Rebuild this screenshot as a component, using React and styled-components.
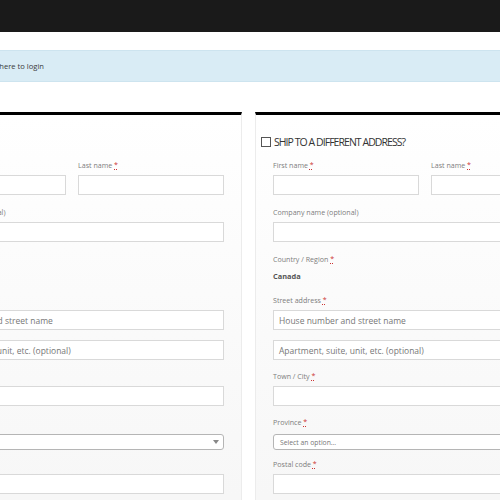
import React from "react";
import styled, { createGlobalStyle } from "styled-components";

const Global = createGlobalStyle`
  html, body { margin: 0; padding: 0; background: #fff; overflow: hidden; }
  body { font-family: "Open Sans", "Liberation Sans", sans-serif; width: 500px; height: 500px; }
`;

const Page = styled.div`
  width: 500px;
  height: 500px;
  overflow: hidden;
  display: flex;
  flex-direction: column;
`;

const Header = styled.header`
  height: 32px;
  background: #1a1a1a;
  flex-shrink: 0;
`;

const Notice = styled.div`
  margin-top: 18px;
  height: 30px;
  background: #d9ecf5;
  border-top: 1px solid #cde4ef;
  border-bottom: 1px solid #cde4ef;
  display: flex;
  align-items: center;
  font-size: 7.6px;
  color: #3a3a3a;
  flex-shrink: 0;
`;

const NoticeLead = styled.span`
  margin-left: -156px;
  width: 200px;
  flex-shrink: 0;
  text-align: right;
  white-space: nowrap;
`;

const Columns = styled.div`
  margin-top: 30px;
  margin-left: -98px;
  display: flex;
  gap: 13px;
  align-items: flex-start;
`;

const Panel = styled.section`
  width: 304px;
  flex-shrink: 0;
  border-top: 3px solid #000;
  border-left: 1px solid #ececec;
  border-right: 1px solid #ececec;
  background: linear-gradient(#fff, #f9f9f9 60%, #f6f6f6);
  padding: 0 17px 20px 17px;
  height: 420px;
`;

const PanelHead = styled.div`
  height: 34px;
  padding-top: 10px;
  display: flex;
  align-items: center;
  margin-left: -12px;
  gap: 3px;
`;

const Check = styled.span`
  width: 8px;
  height: 8px;
  border: 1px solid #555;
  background: #fff;
  display: inline-block;
`;

const HeadText = styled.span`
  font-size: 10.5px;
  letter-spacing: -0.95px;
  color: #333;
  text-transform: uppercase;
  white-space: nowrap;
`;

const Row = styled.div`
  display: flex;
  gap: 12px;
  margin-bottom: ${(p) => p.$mb ?? 11}px;
`;

const Field = styled.div`
  flex: 1;
  display: flex;
  flex-direction: column;
`;

const Label = styled.label`
  font-size: 7.1px;
  color: #7d7d7d;
  height: 12px;
  line-height: 12px;
  margin-bottom: ${(p) => p.$mb ?? 4}px;
  white-space: nowrap;
`;

const Req = styled.abbr`
  color: #c33;
  text-decoration: underline dotted;
`;

const Input = styled.div`
  height: 18px;
  border: 1px solid #d9d9d9;
  background: #fff;
  display: flex;
  align-items: center;
  padding: 0 5px;
  font-size: 8.5px;
  color: #777;
  white-space: nowrap;
  overflow: hidden;
  margin-bottom: ${(p) => p.$mb ?? 0}px;
`;

const Select = styled.div`
  height: 14px;
  border: 1px solid #b5b5b5;
  border-radius: 3px;
  background: #fff;
  display: flex;
  align-items: center;
  justify-content: space-between;
  padding: 0 4px 0 6px;
  font-size: 6.8px;
  color: #777;
  white-space: nowrap;
`;

const Arrow = styled.span`
  width: 0;
  height: 0;
  border-left: 3px solid transparent;
  border-right: 3px solid transparent;
  border-top: 4px solid #888;
`;

const StaticValue = styled.div`
  font-size: 7.4px;
  font-weight: 700;
  color: #555;
  height: 12px;
  line-height: 12px;
`;

const R = () => <Req title="required">*</Req>;

function AddressFields({ country }) {
  return (
    <>
      <Row $mb={11}>
        <Field>
          <Label>First name <R /></Label>
          <Input />
        </Field>
        <Field>
          <Label>Last name <R /></Label>
          <Input />
        </Field>
      </Row>
      <Row $mb={11}>
        <Field>
          <Label>Company name (optional)</Label>
          <Input />
        </Field>
      </Row>
      <Row $mb={12}>
        <Field>
          <Label $mb={5}>Country / Region <R /></Label>
          <StaticValue>{country}</StaticValue>
        </Field>
      </Row>
      <Row $mb={10}>
        <Field>
          <Label>Street address <R /></Label>
          <Input $mb={10}>House number and street name</Input>
          <Input>Apartment, suite, unit, etc. (optional)</Input>
        </Field>
      </Row>
      <Row $mb={10}>
        <Field>
          <Label>Town / City <R /></Label>
          <Input />
        </Field>
      </Row>
      <Row $mb={8}>
        <Field>
          <Label $mb={6}>Province <R /></Label>
          <Select>
            Select an option…
            <Arrow />
          </Select>
        </Field>
      </Row>
      <Row>
        <Field>
          <Label>Postal code <R /></Label>
          <Input />
        </Field>
      </Row>
    </>
  );
}

export default function App() {
  return (
    <Page>
      <Global />
      <Header />
      <Notice>
        <NoticeLead>Returning customer? Click here to login</NoticeLead>
      </Notice>
      <Columns>
        <Panel>
          <PanelHead>
            <HeadText>Billing details</HeadText>
          </PanelHead>
          <AddressFields country="Canada" />
        </Panel>
        <Panel>
          <PanelHead>
            <Check />
            <HeadText>Ship to a different address?</HeadText>
          </PanelHead>
          <AddressFields country="Canada" />
        </Panel>
      </Columns>
    </Page>
  );
}
